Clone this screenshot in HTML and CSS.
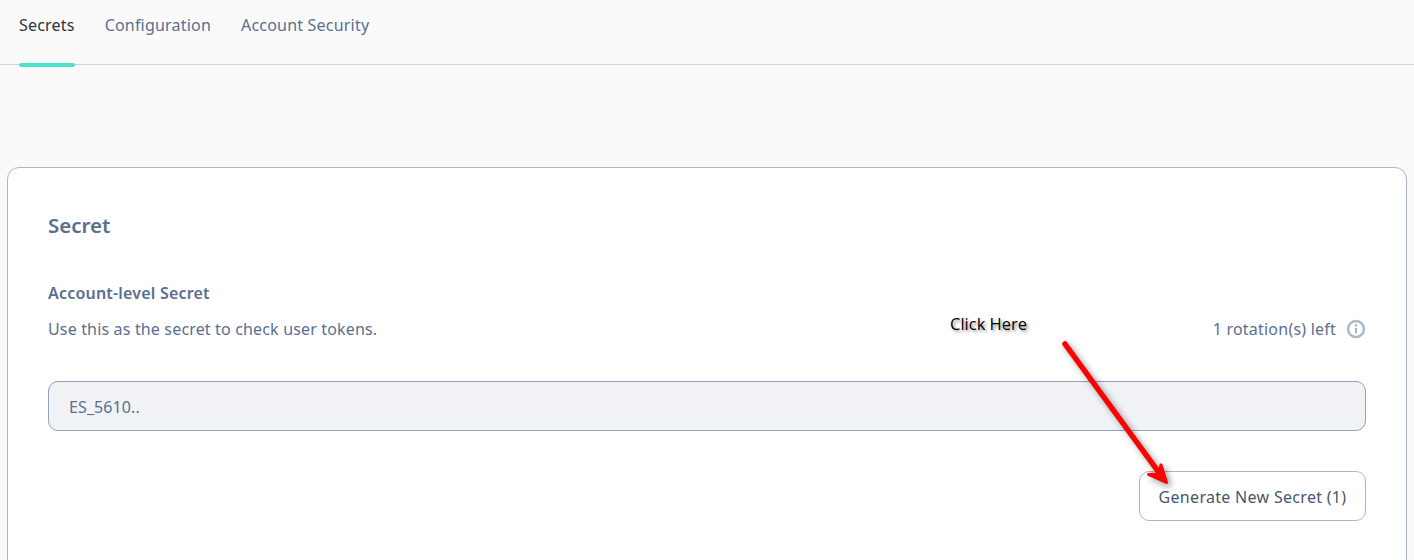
FILE: index.html
```html
<!DOCTYPE html>
<html lang="en">
<head>
  <meta charset="UTF-8">
  <meta name="viewport" content="width=device-width, initial-scale=1.0">
  <title>Secrets</title>
  <link rel="stylesheet" href="styles.css">
</head>
<body>
  <!-- Tabs -->
  <nav class="tabs">
    <a class="tab active">Secrets</a>
    <a class="tab">Configuration</a>
    <a class="tab">Account Security</a>
  </nav>

  <!-- Secret card -->
  <section class="card">
    <h2 class="card-title">Secret</h2>
    <h3 class="field-title">Account-level Secret</h3>
    <div class="field-row">
      <p class="field-desc">Use this as the secret to check user tokens.</p>
      <div class="rotations">
        <span>1 rotation(s) left</span>
        <svg class="info-icon" width="20" height="20" viewBox="0 0 20 20" fill="none">
          <circle cx="10" cy="10" r="8" stroke="#a9b6c9" stroke-width="2.400"/>
          <circle cx="10" cy="6.200" r="1.300" fill="#a9b6c9"/>
          <rect x="8.900" y="8.800" width="2.200" height="5.600" rx="0.600" fill="#a9b6c9"/>
        </svg>
      </div>
    </div>
    <div class="secret-box">ES_5610..</div>
    <div class="actions">
      <button class="generate-btn">Generate New Secret (1)</button>
    </div>
  </section>

  <!-- Annotation drawn on the screenshot -->
  <span class="note">Click Here</span>
  <svg class="arrow" width="140" height="170" viewBox="0 0 140 170" fill="none">
    <path d="M15 19 L110 149" stroke="#f00" stroke-width="5.500" stroke-linecap="round"/>
    <path d="M116.500 157.500 L111 140 L108 149 L98.500 149.500 Z" fill="#f00" stroke="#f00" stroke-width="3" stroke-linejoin="round"/>
  </svg>
</body>
</html>
```

FILE: styles.css
```css
/* Reset */
* {
  margin: 0;
  padding: 0;
  box-sizing: border-box;
}

body {
  position: relative;
  height: 560px;
  overflow: hidden;
  background-color: #fafafa;
  font-family: "Noto Sans", "Open Sans", sans-serif;
  color: #5a6f8f;
}

/* Tabs */
.tabs {
  display: flex;
  gap: 30px;
  height: 65px;
  padding-left: 19px;
  border-bottom: 1px solid #ccd4e2;
}

.tab {
  height: 67px;
  padding-top: 13px;
  font-size: 16px;
  line-height: 24px;
  letter-spacing: 0.2px;
  color: #5a6f8f;
}

.tab.active {
  color: #2d3440;
}

.tab.active::after {
  content: "";
  display: block;
  height: 4px;
  margin-top: 26px;
  background-color: #4be0cf;
  border-radius: 2px;
}

/* Card */
.card {
  margin: 102px 7px 0;
  height: 420px;
  padding: 42px 40px 0;
  background-color: #fff;
  border: 1px solid #a9b6c9;
  border-radius: 12px;
}

.card-title {
  font-size: 20.500px;
  line-height: 30px;
  font-weight: 600;
  color: #5a6f8f;
}

.field-title {
  margin-top: 41px;
  font-size: 16px;
  line-height: 24px;
  font-weight: 600;
  letter-spacing: 0.2px;
  color: #5a6f8f;
}

.field-row {
  display: flex;
  justify-content: space-between;
  align-items: center;
  margin-top: 12px;
}

.field-desc {
  font-size: 16px;
  line-height: 24px;
  letter-spacing: 0.16px;
}

.rotations {
  display: flex;
  align-items: center;
  gap: 10px;
  font-size: 16px;
  line-height: 24px;
  letter-spacing: 0.22px;
}

.info-icon {
  display: block;
}

.secret-box {
  margin-top: 40px;
  height: 50px;
  padding-left: 20px;
  font-size: 16px;
  line-height: 50px;
  letter-spacing: 0.1px;
  background-color: #f0f2f6;
  border: 1px solid #90a2bc;
  border-radius: 10px;
}

.actions {
  display: flex;
  justify-content: flex-end;
  margin-top: 40px;
}

.generate-btn {
  width: 227px;
  height: 50px;
  padding-top: 2px;
  font-family: inherit;
  font-size: 16px;
  letter-spacing: 0.3px;
  color: #47566f;
  background-color: #fff;
  border: 1px solid #a9b6c9;
  border-radius: 10px;
  cursor: pointer;
}

/* Annotation */
.note {
  position: absolute;
  left: 950px;
  top: 314px;
  font-family: "Open Sans", sans-serif;
  font-size: 16.500px;
  line-height: 20px;
  color: #000;
  text-shadow: 2px 2px 3px rgba(0, 0, 0, 0.45);
}

.arrow {
  position: absolute;
  left: 1050px;
  top: 325px;
  filter: drop-shadow(3px 3px 3px rgba(0, 0, 0, 0.4));
}
```
